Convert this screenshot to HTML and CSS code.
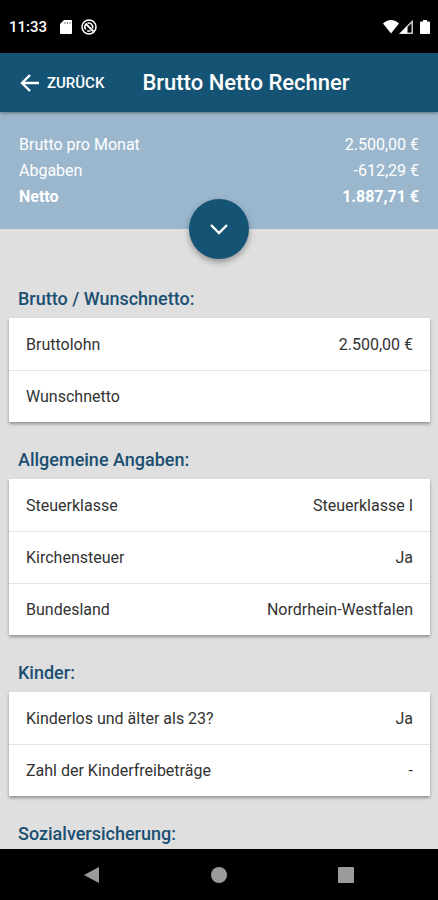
FILE: index.html
```html
<!DOCTYPE html>
<html lang="de">
<head>
    <meta charset="UTF-8">
    <meta name="viewport" content="width=device-width, initial-scale=1.0">
    <title>Brutto Netto Rechner</title>
    <link rel="stylesheet" href="styles.css">
</head>
<body>
    <div class="status-bar">
        <div class="status-left">
            <span class="clock">11:33</span>
            <svg class="sd-icon" width="12" height="14" viewBox="0 0 12 14"><path d="M4 0h7a1 1 0 0 1 1 1v12a1 1 0 0 1-1 1H1a1 1 0 0 1-1-1V4z" fill="#fff"/><path d="M5 2v2M7.500 2v2M10 2v2" stroke="#777" stroke-width="1"/></svg>
            <svg class="sync-icon" width="16" height="16" viewBox="0 0 16 16" fill="none" stroke="#fff"><circle cx="8" cy="8" r="7" stroke-width="1.500"/><path d="M4.800 10.500A4 4 0 0 1 5 5.200M6.500 4.300A4 4 0 0 1 11.500 9.500M9.500 11.700A4 4 0 0 1 6.200 11.600" stroke-width="1.600"/><path d="M4.500 4.500l8 8" stroke-width="1.800"/></svg>
        </div>
        <div class="status-right">
            <svg width="16" height="14" viewBox="0 0 16 14"><path d="M0 3.500Q3.500 0 8 0t8 3.500L8 13.500z" fill="#fff"/></svg>
            <svg width="14" height="14" viewBox="0 0 14 14"><path d="M13.200 1.500v11.700H1.500z" fill="none" stroke="#ccc" stroke-width="1.500"/><path d="M1 13.500L8.500 6v7.500z" fill="#fff"/></svg>
            <svg class="battery-icon" width="10" height="14" viewBox="0 0 10 14"><path d="M3 0h4v1.500h2a1 1 0 0 1 1 1V13a1 1 0 0 1-1 1H1a1 1 0 0 1-1-1V2.500a1 1 0 0 1 1-1h2z" fill="#fff"/></svg>
        </div>
    </div>

    <header class="header">
        <button type="button" class="back-button">
            <svg width="20" height="18" viewBox="0 0 20 18" fill="none" stroke="#fff" stroke-width="2.400"><path d="M10 1L2 9l8 8M2 9h17"/></svg>
            Zurück
        </button>
        <h1>Brutto Netto Rechner</h1>
    </header>

    <section class="summary">
        <dl>
            <div class="summary-row"><dt>Brutto pro Monat</dt><dd>2.500,00 €</dd></div>
            <div class="summary-row"><dt>Abgaben</dt><dd>-612,29 €</dd></div>
            <div class="summary-row total"><dt>Netto</dt><dd>1.887,71 €</dd></div>
        </dl>
        <button type="button" class="expand-button" aria-label="Details anzeigen">
            <svg width="20" height="12" viewBox="0 0 20 12" fill="none" stroke="#fff" stroke-width="2.400"><path d="M2 2l8 8 8-8"/></svg>
        </button>
    </section>

    <main class="content">
        <form>
            <h2>Brutto / Wunschnetto:</h2>
            <div class="card">
                <div class="row">
                    <label for="brutto">Bruttolohn</label>
                    <input type="text" id="brutto" value="2.500,00 €">
                </div>
                <div class="row">
                    <label for="wunsch">Wunschnetto</label>
                    <input type="text" id="wunsch">
                </div>
            </div>

            <h2>Allgemeine Angaben:</h2>
            <div class="card">
                <div class="row">
                    <label for="klasse">Steuerklasse</label>
                    <select id="klasse"><option>Steuerklasse I</option></select>
                </div>
                <div class="row">
                    <label for="kirche">Kirchensteuer</label>
                    <select id="kirche"><option>Ja</option></select>
                </div>
                <div class="row">
                    <label for="land">Bundesland</label>
                    <select id="land"><option>Nordrhein-Westfalen</option></select>
                </div>
            </div>

            <h2>Kinder:</h2>
            <div class="card">
                <div class="row">
                    <label for="kinderlos">Kinderlos und älter als 23?</label>
                    <select id="kinderlos"><option>Ja</option></select>
                </div>
                <div class="row">
                    <label for="freibetrag">Zahl der Kinderfreibeträge</label>
                    <select id="freibetrag"><option>-</option></select>
                </div>
            </div>

            <h2>Sozialversicherung:</h2>
        </form>
    </main>

    <nav class="nav-bar">
        <button type="button" aria-label="Zurück"><svg width="18" height="18" viewBox="0 0 18 18"><path d="M1 9L16 1v16z" fill="#9b9b9b"/></svg></button>
        <button type="button" aria-label="Startbildschirm"><svg width="18" height="18" viewBox="0 0 18 18"><circle cx="9" cy="9" r="8" fill="#9b9b9b"/></svg></button>
        <button type="button" aria-label="Übersicht"><svg width="18" height="18" viewBox="0 0 18 18"><rect x="1" y="1" width="16" height="16" rx="1" fill="#9b9b9b"/></svg></button>
    </nav>
</body>
</html>
```
FILE: styles.css
```css
* {
    box-sizing: border-box;
}

body {
    margin: 0;
    height: 100vh;
    display: flex;
    flex-direction: column;
    font-family: Roboto, sans-serif;
    font-size: 16px;
    color: #333333;
    background-color: #dfdfdf;
}

button {
    border: none;
    padding: 0;
    background: none;
    color: inherit;
    font-family: inherit;
    cursor: pointer;
}

svg {
    display: block;
}

.status-bar {
    flex: none;
    height: 53px;
    padding: 1px 8px 0 9px;
    display: flex;
    align-items: center;
    justify-content: space-between;
    background-color: #000000;
    color: #ffffff;
}

.status-left,
.status-right {
    display: flex;
    align-items: center;
}

.clock {
    font-size: 15px;
    font-weight: 500;
}

.sd-icon {
    margin-left: 13px;
}

.sync-icon {
    margin-left: 9px;
}

.battery-icon {
    margin-left: 7px;
}

.header {
    flex: none;
    height: 59px;
    padding: 0 20px;
    display: flex;
    align-items: center;
    gap: 38px;
    background-color: #145374;
    color: #ffffff;
    box-shadow: 0 1px 3px rgba(0, 0, 0, 0.4);
    z-index: 1;
}

.header h1 {
    margin: 0;
    font-size: 22px;
    font-weight: 500;
}

.back-button {
    display: flex;
    align-items: center;
    gap: 7px;
    font-size: 15px;
    font-weight: 500;
    text-transform: uppercase;
}

.summary {
    flex: none;
    position: relative;
    height: 117px;
    padding: 20px 19px;
    background-color: #9bb7cd;
    color: #ffffff;
}

.summary dl {
    margin: 0;
}

.summary-row {
    display: flex;
    justify-content: space-between;
    line-height: 26px;
}

.summary-row dd {
    margin: 0;
}

.total {
    font-weight: bold;
}

.expand-button {
    position: absolute;
    left: 50%;
    bottom: 0;
    transform: translate(-50%, 50%);
    width: 60px;
    height: 60px;
    border-radius: 50%;
    display: flex;
    align-items: center;
    justify-content: center;
    background-color: #145374;
    box-shadow: 0 3px 6px rgba(0, 0, 0, 0.35);
}

.content {
    flex: 1;
    min-height: 0;
    padding: 32px 8px 0 9px;
    overflow: hidden;
}

.content h2 {
    margin: 0;
    padding: 9px 9px 0;
    height: 57px;
    line-height: 57px;
    font-size: 18px;
    font-weight: 500;
    color: #1b4f72;
}

.card {
    background-color: #ffffff;
    box-shadow: 0 2px 3px rgba(0, 0, 0, 0.35);
}

.row {
    height: 52px;
    padding: 0 17px;
    display: flex;
    align-items: center;
    justify-content: space-between;
}

.row:not(:last-child) {
    box-shadow: 0 1px 0 #e4e4e4;
}

.row input,
.row select {
    flex: 1;
    min-width: 0;
    padding: 0;
    border: none;
    outline: none;
    appearance: none;
    background: none;
    font: inherit;
    color: inherit;
    text-align: right;
    text-align-last: right;
}

.nav-bar {
    flex: none;
    height: 51px;
    padding: 0 29px;
    display: flex;
    background-color: #000000;
}

.nav-bar button {
    flex: 1;
    display: flex;
    align-items: center;
    justify-content: center;
}
```
